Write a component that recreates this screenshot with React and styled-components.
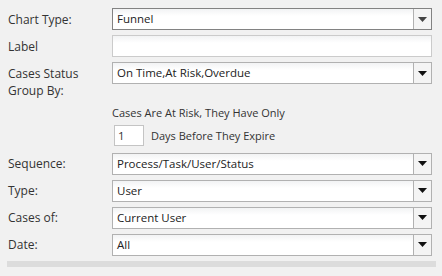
import React from "react";
import styled, { createGlobalStyle } from "styled-components";

const GlobalStyle = createGlobalStyle`
  html, body {
    margin: 0;
    padding: 0;
    background: #f1f1f1;
  }
  body {
    font-family: "Open Sans", "DejaVu Sans", sans-serif;
    font-size: 12px;
    color: #333;
  }
`;

const Form = styled.div`
  width: 442px;
  height: 276px;
  box-sizing: border-box;
  padding: 8px 10px 0 8px;
`;

const Row = styled.div`
  display: grid;
  grid-template-columns: 104px 1fr;
  margin-bottom: 5px;
`;

const Label = styled.div`
  line-height: 17px;
  padding-top: 2.5px;
  width: 96px;
`;

const Field = styled.div`
  position: relative;
  height: 22px;
  box-sizing: border-box;
  border: 1px solid ${({ $focused }) => ($focused ? "#828282" : "#b1b1b1")};
  background: linear-gradient(#f2f3f4, #ffffff 7px);
  display: flex;
  align-items: center;
`;

const TextInput = styled(Field)`
  border-color: #cbcbcb;
`;

const Value = styled.span`
  flex: 1;
  padding-left: 4px;
  font-size: 11.5px;
  line-height: 20px;
  color: #222;
  white-space: nowrap;
  overflow: hidden;
`;

const ArrowButton = styled.span`
  width: 17px;
  height: 100%;
  border-left: 1px solid #b1b1b1;
  background: #f4f4f4;
  display: flex;
  align-items: center;
  justify-content: center;
`;

const Risk = styled.div`
  padding-left: 106px;
  margin-bottom: 7px;
  font-size: 11px;
`;

const RiskText = styled.div`
  line-height: 17px;
  margin: 0 0 4px -2px;
`;

const DaysLine = styled.div`
  display: flex;
  align-items: center;
  gap: 7px;
`;

const DaysInput = styled.div`
  width: 30px;
  height: 21px;
  box-sizing: border-box;
  border: 1px solid #c4c4c4;
  background: #fff;
  padding-left: 3px;
  font-size: 11.5px;
  line-height: 19px;
`;

const Bar = styled.div`
  height: 6px;
  margin: 1px -4px 0 -1px;
  background: #dcdcdc;
`;

const Arrow = ({ light }) => (
  <svg width="9" height="5" viewBox="0 0 9 5">
    <path d="M0 0h9L4.5 5z" fill={light ? "#444" : "#111"} />
  </svg>
);

const Select = ({ value, focused }) => (
  <Field $focused={focused}>
    <Value>{value}</Value>
    <ArrowButton>
      <Arrow light={focused} />
    </ArrowButton>
  </Field>
);

export default function App() {
  return (
    <>
      <GlobalStyle />
      <Form>
        <Row>
          <Label>Chart Type:</Label>
          <Select value="Funnel" focused />
        </Row>
        <Row>
          <Label>Label</Label>
          <TextInput />
        </Row>
        <Row>
          <Label>Cases Status Group By:</Label>
          <Select value="On Time,At Risk,Overdue" />
        </Row>
        <Risk>
          <RiskText>Cases Are At Risk, They Have Only</RiskText>
          <DaysLine>
            <DaysInput>1</DaysInput>
            <span>Days Before They Expire</span>
          </DaysLine>
        </Risk>
        <Row>
          <Label>Sequence:</Label>
          <Select value="Process/Task/User/Status" />
        </Row>
        <Row>
          <Label>Type:</Label>
          <Select value="User" />
        </Row>
        <Row>
          <Label>Cases of:</Label>
          <Select value="Current User" />
        </Row>
        <Row>
          <Label>Date:</Label>
          <Select value="All" />
        </Row>
        <Bar />
      </Form>
    </>
  );
}
